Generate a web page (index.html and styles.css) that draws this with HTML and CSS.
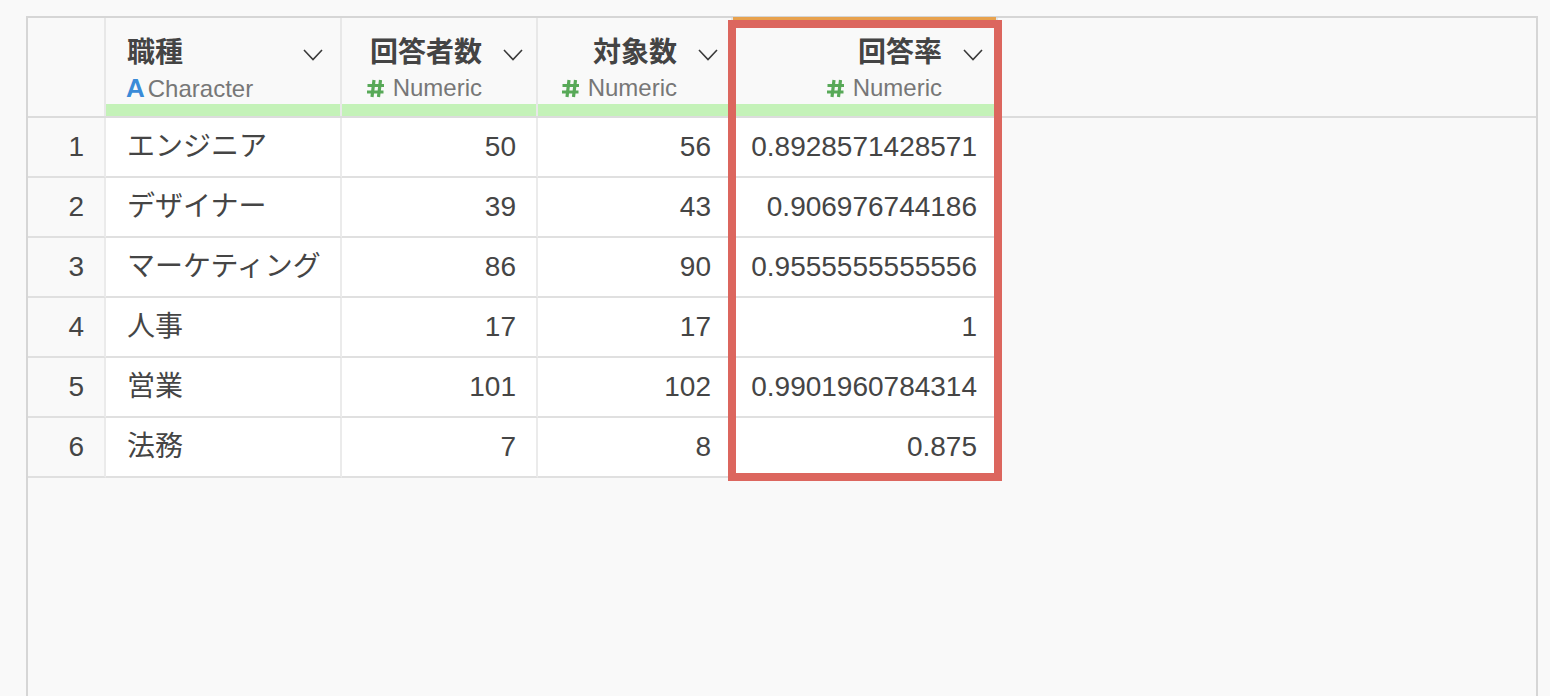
FILE: index.html
```html
<!DOCTYPE html>
<html lang="ja">
<head>
<meta charset="utf-8">
<title>Table</title>
<link rel="stylesheet" href="styles.css">
</head>
<body>
<div class="sheet">
  <div class="head">
    <div class="hcell rn"></div>
    <div class="hcell">
      <div class="hbody">
        <div class="htext">
          <div class="title">職種</div>
          <div class="type"><span class="ico-a">A</span>Character</div>
        </div>
        <svg class="chev" width="20" height="12" viewBox="0 0 20 12"><path d="M1 1 L10 10.5 L19 1" /></svg>
      </div>
      <div class="bar"></div>
    </div>
    <div class="hcell num">
      <div class="hbody">
        <div class="htext">
          <div class="title">回答者数</div>
          <div class="type"><svg class="ico-h" width="19" height="19" viewBox="0 0 19 19"><path d="M8 1 L6 18 M14.5 1 L12.5 18 M1.5 6.5 L18 6.5 M1 13 L17.5 13" /></svg>Numeric</div>
        </div>
        <svg class="chev" width="20" height="12" viewBox="0 0 20 12"><path d="M1 1 L10 10.5 L19 1" /></svg>
      </div>
      <div class="bar"></div>
    </div>
    <div class="hcell num">
      <div class="hbody">
        <div class="htext">
          <div class="title">対象数</div>
          <div class="type"><svg class="ico-h" width="19" height="19" viewBox="0 0 19 19"><path d="M8 1 L6 18 M14.5 1 L12.5 18 M1.5 6.5 L18 6.5 M1 13 L17.5 13" /></svg>Numeric</div>
        </div>
        <svg class="chev" width="20" height="12" viewBox="0 0 20 12"><path d="M1 1 L10 10.5 L19 1" /></svg>
      </div>
      <div class="bar"></div>
    </div>
    <div class="hcell num sel">
      <span class="topline"></span>
      <div class="hbody">
        <div class="htext">
          <div class="title">回答率</div>
          <div class="type"><svg class="ico-h" width="19" height="19" viewBox="0 0 19 19"><path d="M8 1 L6 18 M14.5 1 L12.5 18 M1.5 6.5 L18 6.5 M1 13 L17.5 13" /></svg>Numeric</div>
        </div>
        <svg class="chev" width="20" height="12" viewBox="0 0 20 12"><path d="M1 1 L10 10.5 L19 1" /></svg>
      </div>
      <div class="bar"></div>
    </div>
    <div class="hfill"></div>
  </div>

  <div class="rows">
    <div class="cell rn">1</div><div class="cell">エンジニア</div><div class="cell r">50</div><div class="cell r">56</div><div class="cell r wide">0.8928571428571</div>
    <div class="cell rn">2</div><div class="cell">デザイナー</div><div class="cell r">39</div><div class="cell r">43</div><div class="cell r wide">0.906976744186</div>
    <div class="cell rn">3</div><div class="cell">マーケティング</div><div class="cell r">86</div><div class="cell r">90</div><div class="cell r wide">0.9555555555556</div>
    <div class="cell rn">4</div><div class="cell">人事</div><div class="cell r">17</div><div class="cell r">17</div><div class="cell r wide">1</div>
    <div class="cell rn">5</div><div class="cell">営業</div><div class="cell r">101</div><div class="cell r">102</div><div class="cell r wide">0.9901960784314</div>
    <div class="cell rn">6</div><div class="cell">法務</div><div class="cell r">7</div><div class="cell r">8</div><div class="cell r wide">0.875</div>
  </div>

  <div class="highlight"></div>
</div>
</body>
</html>
```

FILE: styles.css
```css
html, body {
  margin: 0;
  padding: 0;
  background: #f9f9f9;
  overflow: hidden;
}

body {
  font-family: "Liberation Sans", "Noto Sans CJK JP", sans-serif;
  color: #454545;
}

.sheet {
  position: relative;
  box-sizing: border-box;
  width: 1512px;
  height: 760px;
  margin: 16px 0 0 26px;
  border: 2px solid #d6d6d6;
  background: #f9f9f9;
}

.head {
  display: grid;
  grid-template-columns: 78px 236px 196px 195px 265px 1fr;
  height: 100px;
  box-sizing: border-box;
  border-bottom: 2px solid #dcdcdc;
}

.hcell {
  position: relative;
  display: flex;
  flex-direction: column;
  box-sizing: border-box;
  border-right: 2px solid #e8e8e8;
  background: #f9f9f9;
}

.hfill {
  background: #f9f9f9;
}

.hbody {
  height: 86px;
  box-sizing: border-box;
  display: flex;
  align-items: flex-start;
  padding: 16px 17px 0 21px;
}

.num .hbody {
  padding-right: 13px;
}

.htext {
  flex: 1;
  min-width: 0;
}

.num .htext {
  text-align: right;
  margin-right: 21px;
}

.title {
  font-size: 28px;
  font-weight: 700;
  line-height: 38px;
  color: #444;
}

.type {
  font-size: 24px;
  line-height: 32px;
  color: #777;
  white-space: nowrap;
}

.ico-a {
  font-family: "Liberation Sans", sans-serif;
  font-weight: 700;
  font-size: 26px;
  color: #3a8bd8;
  margin-right: 3px;
  margin-left: -1px;
}

.ico-h {
  vertical-align: -2px;
  margin-right: 8px;
}

.ico-h path {
  stroke: #58a958;
  stroke-width: 3.2;
  fill: none;
}

.chev {
  margin-top: 15px;
  flex: none;
}

.chev path {
  stroke: #3a3a3a;
  stroke-width: 1.6;
  fill: none;
}

.bar {
  height: 12px;
  background: #c4f2b8;
}

.topline {
  position: absolute;
  top: -1px;
  left: 0;
  right: 0;
  height: 3px;
  background: #e8a24e;
}

.rows {
  display: grid;
  grid-template-columns: 78px 236px 196px 195px 265px;
  width: 970px;
}

.cell {
  box-sizing: border-box;
  height: 60px;
  line-height: 58px;
  font-size: 28px;
  padding: 0 20px 0 21px;
  background: #fff;
  border-right: 2px solid #ebebeb;
  border-bottom: 2px solid #e0e0e0;
  white-space: nowrap;
  color: #454545;
}

.cell.r {
  text-align: right;
}

.cell.wide {
  padding-left: 10px;
  padding-right: 19px;
}

.cell.rn {
  background: #f9f9f9;
  text-align: right;
  padding-right: 20px;
}

.highlight {
  position: absolute;
  left: 700px;
  top: 2px;
  width: 274px;
  height: 461px;
  box-sizing: border-box;
  border: 8px solid #dc665e;
}
```
